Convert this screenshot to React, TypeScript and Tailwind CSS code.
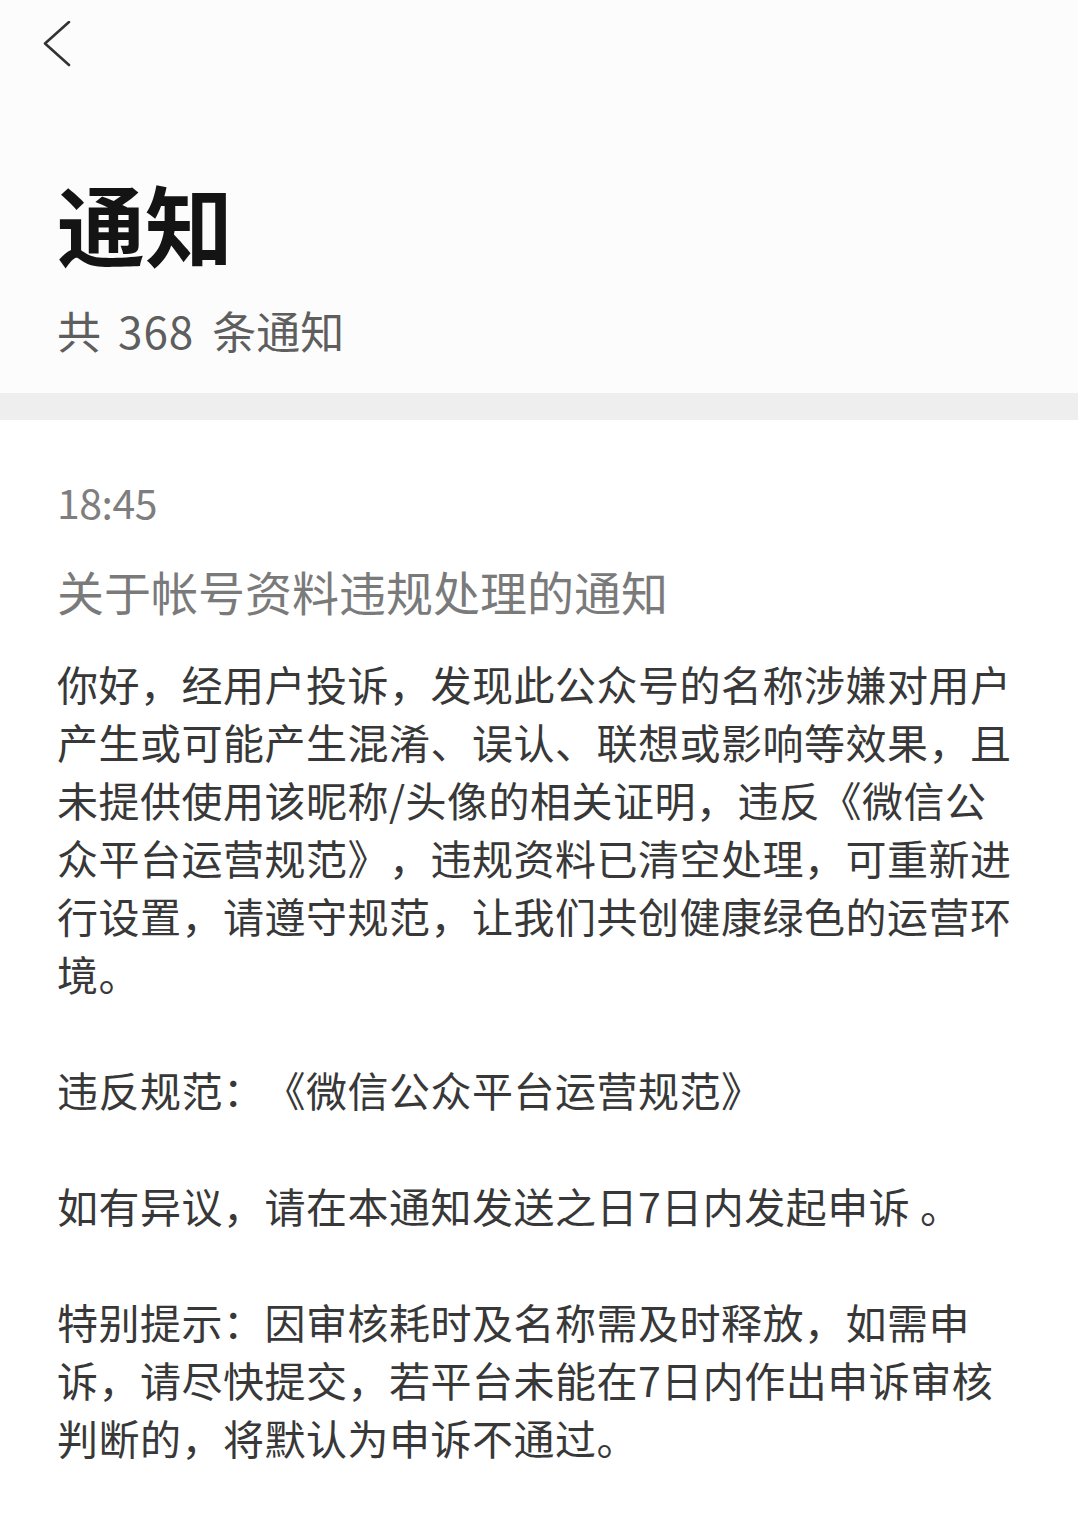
const paragraphs: string[][] = [
  [
    "你好，经用户投诉，发现此公众号的名称涉嫌对用户",
    "产生或可能产生混淆、误认、联想或影响等效果，且",
    "未提供使用该昵称/头像的相关证明，违反《微信公",
    "众平台运营规范》，违规资料已清空处理，可重新进",
    "行设置，请遵守规范，让我们共创健康绿色的运营环",
    "境。",
  ],
  ["违反规范：《微信公众平台运营规范》"],
  ["如有异议，请在本通知发送之日7日内发起申诉 。"],
  [
    "特别提示：因审核耗时及名称需及时释放，如需申",
    "诉，请尽快提交，若平台未能在7日内作出申诉审核",
    "判断的，将默认为申诉不通过。",
  ],
];

function BackIcon() {
  return (
    <svg
      width="28"
      height="46"
      viewBox="0 0 28 46"
      fill="none"
      stroke="#333"
      strokeWidth="2.6"
      strokeLinecap="round"
      strokeLinejoin="round"
      className="-ml-[14px] block"
    >
      <path d="M26 1 L2 22.5 L26 44" />
    </svg>
  );
}

export default function App() {
  return (
    <div className="min-h-[1520px] bg-white font-['Noto_Sans_CJK_SC','Noto_Sans',sans-serif] [text-spacing-trim:space-all]">
      <header className="bg-[#fcfcfc] px-[57px] pb-[41px] pt-[21px]">
        <BackIcon />
        <h1 className="mt-[111px] text-[88px] font-bold leading-none text-[#141414]">
          通知
        </h1>
        <p className="mt-[42px] text-[44px] leading-none text-[#5e5e5e]">
          共<span className="ml-[17px] mr-[18px] tracking-[1px]">368</span>条通知
        </p>
      </header>
      <div className="h-[27px] bg-[#eeeeee]" />
      <article className="px-[57px] pt-[61px] pb-[40px]">
        <p className="text-[41px] leading-none tracking-[-0.5px] text-[#7e7e7e]">18:45</p>
        <h2 className="mt-[45px] text-[47px] leading-none text-[#7a7a7a]">
          关于帐号资料违规处理的通知
        </h2>
        <div className="mt-[40px] space-y-[58px] text-[41px] leading-[58px] tracking-[0.5px] text-[#383838]">
          {paragraphs.map((lines, i) => (
            <p key={i}>
              {lines.map((line, j) => (
                <span key={j} className="block whitespace-nowrap">
                  {line}
                </span>
              ))}
            </p>
          ))}
        </div>
      </article>
    </div>
  );
}
